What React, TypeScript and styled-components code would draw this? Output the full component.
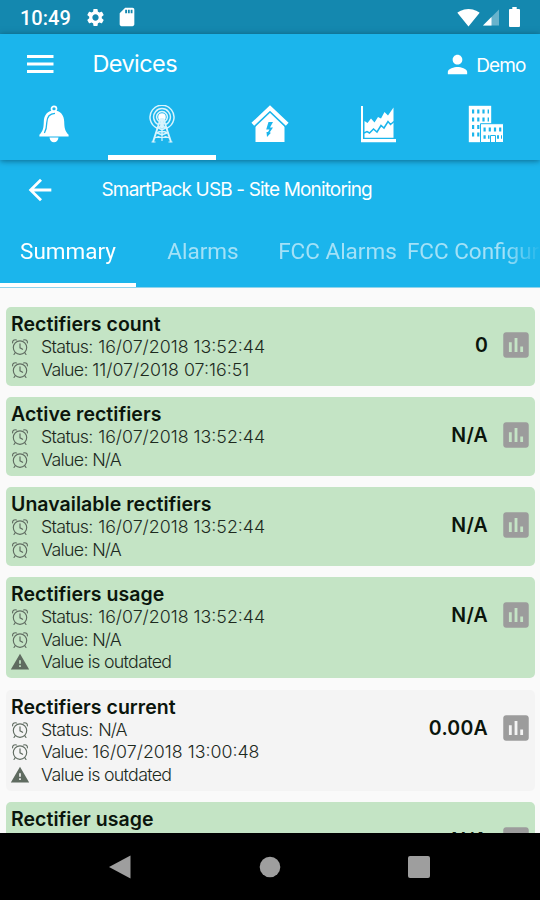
import React from "react";
import styled, { createGlobalStyle } from "styled-components";
import { MdSettings, MdPerson, MdAssessment, MdWarning, MdSignalWifi4Bar, MdArrowBack, MdSdCard } from "react-icons/md";

const Global = createGlobalStyle`
  * { box-sizing: border-box; }
  body { margin: 0; background: #000; }
`;

const Screen = styled.div`
  width: 540px;
  height: 900px;
  display: flex;
  flex-direction: column;
  overflow: hidden;
  background: #fafafa;
  font-family: Inter, sans-serif;
  svg { display: block; flex: none; }
`;

const StatusBar = styled.div`
  flex: none;
  height: 34px;
  padding: 0 20.5px 0 20px;
  display: flex;
  align-items: center;
  color: #fff;
  background: #1488af;
`;
const Clock = styled.span`
  width: 65px;
  padding-top: 1px;
  font: 500 20px/24px Roboto, sans-serif;
`;
const StatusGroup = styled.div<{ $gap: number; $right?: boolean }>`
  display: flex;
  align-items: center;
  gap: ${(p) => p.$gap}px;
  margin-left: ${(p) => (p.$right ? "auto" : "0")};
`;
const BatteryCell = styled.span`
  padding-left: 7px;
`;

const Header = styled.header`
  flex: none;
  height: 126px;
  background: #1bb5ec;
  color: #fff;
  z-index: 1;
  box-shadow: 0 1px 6px rgba(0, 40, 60, 0.55);
`;
const TitleRow = styled.div`
  height: 60px;
  display: flex;
  align-items: center;
  padding: 0 14.5px 0 27px;
`;
const PageTitle = styled.h1`
  margin: 0 auto 0 38.5px;
  font-size: 23.5px;
  line-height: 30px;
  font-weight: 400;
  letter-spacing: -0.6px;
`;
const User = styled.div`
  display: flex;
  align-items: center;
  gap: 4px;
  padding-top: 2px;
  font-size: 19px;
  letter-spacing: -0.9px;
  svg { margin-top: -2px; }
`;
const IconTabs = styled.nav`
  height: 66px;
  display: grid;
  grid-template-columns: repeat(5, 108px);
`;
const IconTab = styled.div<{ $active?: boolean }>`
  display: flex;
  justify-content: center;
  padding-top: 11px;
  height: 66px;
  border-bottom: 5px solid ${(p) => (p.$active ? "#fff" : "transparent")};
`;

const SubHeader = styled.section`
  flex: none;
  height: 128px;
  color: #fff;
  background: #1bb5ec;
  border-bottom: 1px solid #8fd4ec;
`;
const SiteRow = styled.div`
  height: 59px;
  display: flex;
  align-items: center;
  gap: 44.5px;
  padding-left: 23px;
`;
const SiteName = styled.h2`
  margin: 0;
  font-size: 19px;
  line-height: 24px;
  font-weight: 400;
  letter-spacing: -0.85px;
`;
const TextTabs = styled.nav`
  height: 68px;
  display: flex;
  overflow: hidden;
  mask-image: linear-gradient(90deg, #000 505px, transparent 541px);
`;
const TextTab = styled.div<{ $active?: boolean; $width: number }>`
  flex: none;
  width: ${(p) => p.$width}px;
  height: 68px;
  display: flex;
  justify-content: center;
  align-items: center;
  white-space: nowrap;
  font: 400 22.5px/30px Roboto, sans-serif;
  color: ${(p) => (p.$active ? "#fff" : "#a3e1f7")};
  border-bottom: 4px solid ${(p) => (p.$active ? "#fff" : "transparent")};
`;

const List = styled.main`
  flex: 1;
  min-height: 0;
  overflow: hidden;
  display: flex;
  flex-direction: column;
  gap: 11.3px;
  padding: 19px 5.5px 0 6px;
`;
const Card = styled.article<{ $muted?: boolean }>`
  flex: none;
  display: flex;
  padding: 6px 5px 4.5px;
  border-radius: 5px;
  background: ${(p) => (p.$muted ? "#f4f4f4" : "#c4e4c5")};
`;
const Details = styled.div`
  flex: 1;
`;
const Name = styled.h3`
  margin: 0;
  font-size: 19.5px;
  line-height: 23px;
  font-weight: 600;
  letter-spacing: 0.04px;
  color: #0b150c;
`;
const Line = styled.p`
  margin: 0;
  height: 22.6px;
  display: flex;
  align-items: center;
  font-size: 17.8px;
  font-weight: 300;
  line-height: 22.6px;
  letter-spacing: -0.68px;
  color: #1d2a1e;
`;
const Stamp = styled.span<{ $gap: number; $tight: boolean }>`
  margin-left: ${(p) => p.$gap}px;
  letter-spacing: ${(p) => (p.$tight ? "-0.9px" : "0")};
`;
const IconCell = styled.span`
  width: 18px;
  margin-right: 12px;
  display: flex;
  justify-content: center;
  color: #5f6b60;
`;
const Reading = styled.div`
  height: 64.5px;
  display: flex;
  align-items: center;
  gap: 11px;
  font-size: 19.5px;
  font-weight: 600;
  letter-spacing: 0.25px;
  color: #0b150c;
`;
const ChartButton = styled.span`
  color: #9c9c9c;
  margin-right: -3.5px;
`;

const SystemNav = styled.footer`
  flex: none;
  height: 67px;
  background: #000;
  display: grid;
  grid-template-columns: 90px 1fr 90px;
  padding: 0 76px 0 75px;
  align-items: center;
  justify-items: center;
`;

const Menu = () => (
  <svg width="27" height="20" viewBox="0 0 27 20">
    <path d="M0 2.5h26.5M0 10h26.5M0 17.5h26.5" stroke="#fff" strokeWidth="3" />
  </svg>
);
const Alarm = () => (
  <svg width="18" height="18" viewBox="0 0 18 18" fill="none" stroke="currentColor" strokeWidth="1.15" strokeLinecap="round">
    <circle cx="9" cy="9.6" r="6.7" />
    <path d="M9 5.7V9.8l2.6 1.5M4.2 14.7 3 16.5M13.8 14.7l1.2 1.8M1.6 4.8C1.3 2.7 3.3 1.1 5.4 2M16.4 4.8c.3-2.1-1.7-3.7-3.8-2.8" />
  </svg>
);
const Bell = () => (
  <svg width="30" height="38" viewBox="0 0 30 38">
    <circle cx="15" cy="3.8" r="2.5" fill="none" stroke="#fff" strokeWidth="1.7" />
    <path fill="#fff" d="M15 5.5c6.3 0 10 4.6 10.2 11 .2 7 .8 9.4 4.4 13.3V31.5H.4v-1.7C4 25.9 4.6 23.5 4.8 16.5 5 10.1 8.7 5.5 15 5.5ZM10.5 32.5h9c-.4 3-2 4.7-4.5 4.7s-4.1-1.7-4.5-4.7Z" />
    <path d="M16 8.3C10.5 8.5 8 12 7.8 17.5c-.1 5-.8 7.7-2.4 10.5" fill="none" stroke="#1bb5ec" strokeWidth="1.3" />
  </svg>
);
const Tower = () => (
  <svg width="26" height="38" viewBox="0 0 26 38" fill="none" stroke="#d9f4fd" strokeWidth="1.5">
    <circle cx="13" cy="12" r="3.8" fill="#fff" stroke="none" />
    <path d="M8.2 23.2A12 12 0 1 1 17.8 23.2M9 19.4A8.4 8.4 0 1 1 17 19.4M10 16.5A5.4 5.4 0 1 1 16 16.5" />
    <path d="M11.5 14 4 37M14.5 14 22 37" strokeWidth="1.9" />
    <path d="M13 13v10" strokeWidth="3.5" />
    <path d="M10.5 18h5M9 23h8M7.5 28h11M5.8 32.5h14.4M10.5 18 17 23 7.5 28l13 5M15.5 18 9 23l9.5 5-13 5M2.5 37h4M19.5 37h4M13 14v22" strokeWidth="1.2" />
  </svg>
);
const House = () => (
  <svg width="38" height="38" viewBox="0 0 38 38">
    <path fill="#fff" d="M19 6.5 33.5 20v17H4.5V20Z" />
    <path d="m1.2 20.3 17.8-16.8 17.8 16.8" fill="none" stroke="#1bb5ec" strokeWidth="6.5" />
    <path d="m1.8 19.3 17.2-16.3 17.2 16.3" fill="none" stroke="#fff" strokeWidth="4" />
    <path d="m17.5 17-2.3 7.5h3.3l-1.5 2.500h-1.5l.5 5 4-4.2-1.4-.3 3.4-5h-3l3-5.5Z" fill="#1bb5ec" />
  </svg>
);
const Trend = () => (
  <svg width="36" height="38" viewBox="0 0 36 38">
    <path fill="#fff" d="M1 1h2v33h33v3.2H1ZM4.5 16l3 2 3.5-4.5 3.5 4L18 12l3 1.5L24.5 7l3.5 3.5L33.5 2.5v30.3h-29Z" />
    <path d="m4 28 3-1.5 2.5 1.5 4-4 3.5 3 4-6.5 3 2.5 4-6.5 2.5 3 3.5-3" fill="none" stroke="#1bb5ec" strokeWidth="1.5" />
  </svg>
);
const Buildings = () => (
  <svg width="36" height="38" viewBox="0 0 36 38">
    <path fill="#fff" d="M.8.8h22.4v36.4H.8Z" />
    <path stroke="#1bb5ec" strokeWidth="1" fill="#fff" d="M12.5 18.7h23v18.8h-23Z" />
    <path stroke="#1bb5ec" strokeWidth="4" strokeDasharray="2.2 3" d="M4 6.5h17M4 14.5h17M4 22h8M4 29.5h8M15.5 24.5h18" />
    <path stroke="#1bb5ec" strokeWidth="3.5" d="M15.5 32h2.2M20 32h1.5M29 32h2M33 32h1" />
    <path stroke="#1bb5ec" fill="none" d="M22.5 37v-6.5h5V37" />
  </svg>
);
const Signal = () => (
  <svg width="16" height="17" viewBox="0 0 17 17">
    <path d="M17 0v17H0Z" fill="#68b3cc" />
    <path d="M9 8v9H0Z" fill="#fff" />
  </svg>
);
const Battery = () => (
  <svg width="11" height="20" viewBox="0 0 11 20">
    <path d="M3.3 0h4.4v2H10q1 0 1 1v16q0 1-1 1H1q-1 0-1-1V3q0-1 1-1h2.3Z" fill="#fff" />
  </svg>
);

type Entry = { name: string; reading: string; status: string; value: string; outdated?: boolean; muted?: boolean };
const entries: Entry[] = [
  { name: "Rectifiers count", reading: "0", status: "16/07/2018 13:52:44", value: "11/07/2018 07:16:51" },
  { name: "Active rectifiers", reading: "N/A", status: "16/07/2018 13:52:44", value: "N/A" },
  { name: "Unavailable rectifiers", reading: "N/A", status: "16/07/2018 13:52:44", value: "N/A" },
  { name: "Rectifiers usage", reading: "N/A", status: "16/07/2018 13:52:44", value: "N/A", outdated: true },
  { name: "Rectifiers current", reading: "0.00A", status: "N/A", value: "16/07/2018 13:00:48", outdated: true, muted: true },
  { name: "Rectifier usage", reading: "N/A", status: "16/07/2018 13:52:44", value: "N/A" },
];

const TimeLine = ({ label, text }: { label: string; text: string }) => (
  <Line>
    <IconCell><Alarm /></IconCell>
    {label}:
    <Stamp $gap={label === "Status" ? 5.5 : 4.5} $tight={text === "N/A"}>{text}</Stamp>
  </Line>
);

export default function App() {
  return (
    <Screen>
      <Global />
      <StatusBar>
        <Clock>10:49</Clock>
        <StatusGroup $gap={10}>
          <MdSettings size={21} />
          <MdSdCard size={22} />
        </StatusGroup>
        <StatusGroup $gap={3} $right>
          <MdSignalWifi4Bar size={23} />
          <Signal />
          <BatteryCell><Battery /></BatteryCell>
        </StatusGroup>
      </StatusBar>
      <Header>
        <TitleRow>
          <Menu />
          <PageTitle>Devices</PageTitle>
          <User>
            <MdPerson size={29} />
            Demo
          </User>
        </TitleRow>
        <IconTabs>
          <IconTab><Bell /></IconTab>
          <IconTab $active><Tower /></IconTab>
          <IconTab><House /></IconTab>
          <IconTab><Trend /></IconTab>
          <IconTab><Buildings /></IconTab>
        </IconTabs>
      </Header>
      <SubHeader>
        <SiteRow>
          <MdArrowBack size={34} />
          <SiteName>SmartPack USB - Site Monitoring</SiteName>
        </SiteRow>
        <TextTabs>
          <TextTab $active $width={136}>Summary</TextTab>
          <TextTab $width={134}>Alarms</TextTab>
          <TextTab $width={135}>FCC Alarms</TextTab>
          <TextTab $width={186}>FCC Configuration</TextTab>
        </TextTabs>
      </SubHeader>
      <List>
        {entries.map((e) => (
          <Card key={e.name} $muted={e.muted}>
            <Details>
              <Name>{e.name}</Name>
              <TimeLine label="Status" text={e.status} />
              <TimeLine label="Value" text={e.value} />
              {e.outdated && <Line><IconCell><MdWarning size={20} /></IconCell>Value is outdated</Line>}
            </Details>
            <Reading>
              {e.reading}
              <ChartButton><MdAssessment size={34} /></ChartButton>
            </Reading>
          </Card>
        ))}
      </List>
      <SystemNav>
        <svg width="22" height="24" viewBox="0 0 22 24"><path d="M21.5.5v23L0 12Z" fill="#9e9e9e" /></svg>
        <svg width="22" height="22" viewBox="0 0 22 22"><circle cx="11" cy="11" r="10.3" fill="#9e9e9e" /></svg>
        <svg width="22" height="22" viewBox="0 0 22 22"><rect width="22" height="22" rx="2" fill="#9e9e9e" /></svg>
      </SystemNav>
    </Screen>
  );
}
